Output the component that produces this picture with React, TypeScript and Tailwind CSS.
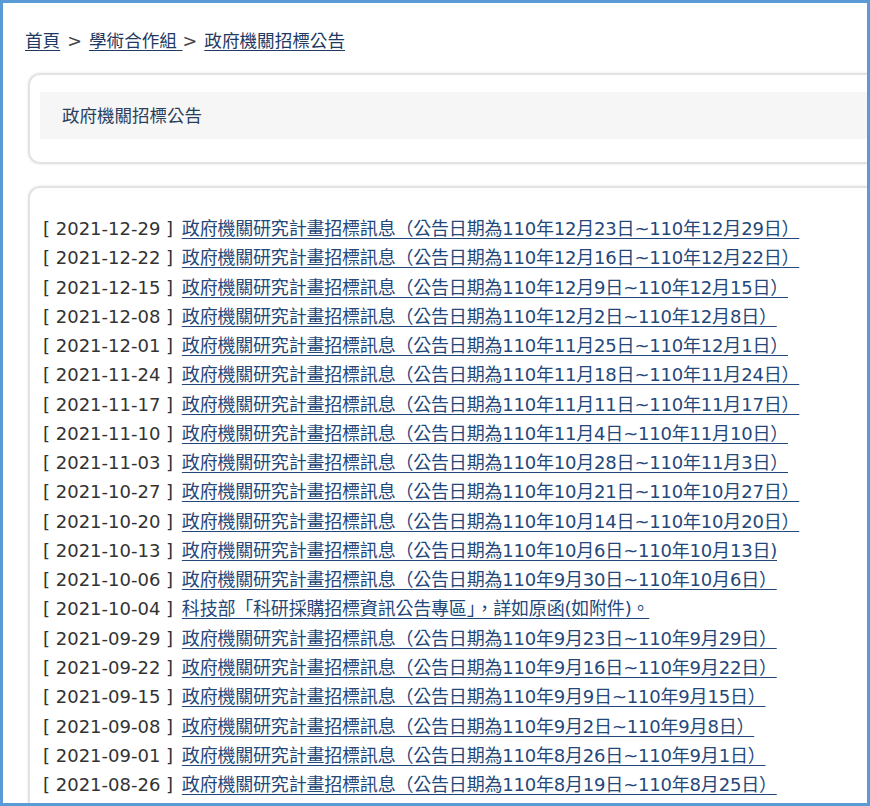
import React from "react";

type Notice = {
  date: string;
  title: string;
};

const base = "政府機關研究計畫招標訊息（公告日期為";

const notices: Notice[] = [
  { date: "2021-12-29", title: `${base}110年12月23日~110年12月29日）` },
  { date: "2021-12-22", title: `${base}110年12月16日~110年12月22日）` },
  { date: "2021-12-15", title: `${base}110年12月9日~110年12月15日）` },
  { date: "2021-12-08", title: `${base}110年12月2日~110年12月8日）` },
  { date: "2021-12-01", title: `${base}110年11月25日~110年12月1日）` },
  { date: "2021-11-24", title: `${base}110年11月18日~110年11月24日）` },
  { date: "2021-11-17", title: `${base}110年11月11日~110年11月17日）` },
  { date: "2021-11-10", title: `${base}110年11月4日~110年11月10日）` },
  { date: "2021-11-03", title: `${base}110年10月28日~110年11月3日）` },
  { date: "2021-10-27", title: `${base}110年10月21日~110年10月27日）` },
  { date: "2021-10-20", title: `${base}110年10月14日~110年10月20日）` },
  { date: "2021-10-13", title: `${base}110年10月6日~110年10月13日)` },
  { date: "2021-10-06", title: `${base}110年9月30日~110年10月6日）` },
  { date: "2021-10-04", title: "科技部「科研採購招標資訊公告專區」，詳如原函(如附件)。" },
  { date: "2021-09-29", title: `${base}110年9月23日~110年9月29日）` },
  { date: "2021-09-22", title: `${base}110年9月16日~110年9月22日）` },
  { date: "2021-09-15", title: `${base}110年9月9日~110年9月15日）` },
  { date: "2021-09-08", title: `${base}110年9月2日~110年9月8日）` },
  { date: "2021-09-01", title: `${base}110年8月26日~110年9月1日）` },
  { date: "2021-08-26", title: `${base}110年8月19日~110年8月25日）` },
];

const card =
  "w-[900px] rounded-[12px] border-2 border-[#e3e3e3] bg-white shadow-[0_0_2px_1px_rgba(0,0,0,0.05)]";

const crumb = "text-[#1e3a63] underline underline-offset-[3px]";

export default function App() {
  return (
    <div className="h-[806px] w-[870px] overflow-hidden border-[3px] border-[#5b9bd5] bg-white font-['DejaVu_Sans','Noto_Sans_CJK_TC',sans-serif]">
      {/* breadcrumb */}
      <nav className="pl-[22px] pt-[26px] text-[17.6px] leading-[24px] text-[#444]">
        <a href="#" className={crumb}>
          首頁
        </a>
        <span className="mx-[7px]">&gt;</span>
        <a href="#" className={crumb}>
          學術合作組{" "}
        </a>
        <span className="mr-[7px]">&gt;</span>
        <a href="#" className={crumb}>
          政府機關招標公告
        </a>
      </nav>

      <div className="ml-[25px] mt-[20px] flex flex-col gap-[22px]">
        {/* page title */}
        <section className={`${card} px-[10px] pb-[23px] pt-[17px]`}>
          <div className="flex h-[47px] items-center bg-[#f6f6f6] pl-[22px] pt-[2px]">
            <h2 className="text-[17.5px] font-normal text-[#2a3f5e]">政府機關招標公告</h2>
          </div>
        </section>

        {/* notice list */}
        <section className={`${card} min-h-[700px] pl-[13px] pt-[26px]`}>
          <ul className="text-[18px] leading-[29.26px]">
            {notices.map((n) => (
              <li key={n.date} className="whitespace-nowrap text-[#333]">
                <span>[ {n.date} ] </span>
                <a
                  href="#"
                  className="ml-[3px] tracking-[-0.2px] text-[#24477a] underline decoration-[#24477a] underline-offset-[3px]"
                >
                  {n.title}
                </a>
              </li>
            ))}
          </ul>
        </section>
      </div>
    </div>
  );
}
